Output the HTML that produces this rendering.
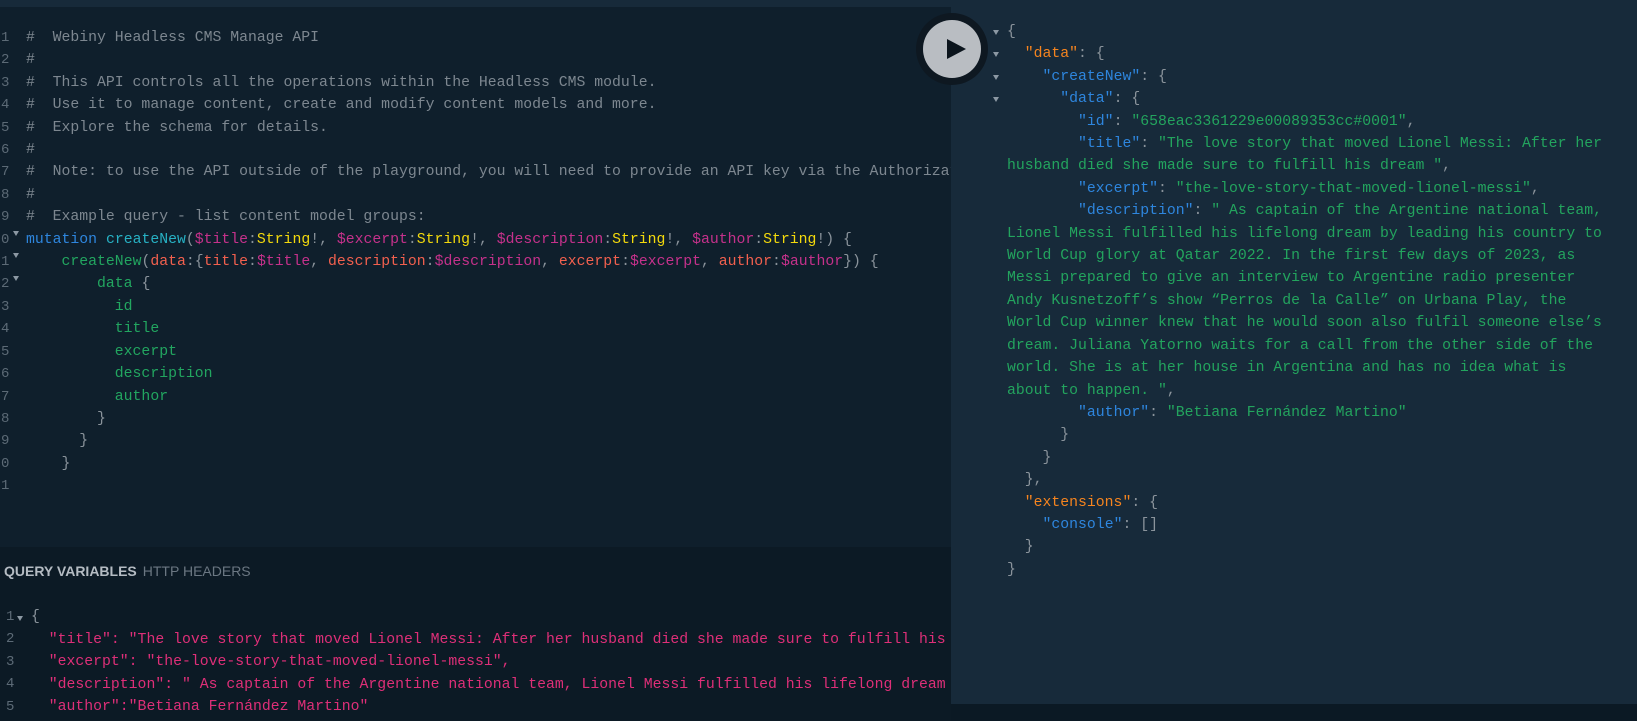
<!DOCTYPE html>
<html><head><meta charset="utf-8"><style>
*{margin:0;padding:0;box-sizing:border-box}
body{width:1637px;height:721px;overflow:hidden;background:#0b1924;position:relative;font-family:"Liberation Mono",monospace;font-size:14.8px}
.top{position:absolute;left:0;top:0;width:1637px;height:7px;background:#172a3a}
.left{position:absolute;left:0;top:7px;width:951px;height:540px;background:#0f1f2c;overflow:hidden}
.vars{position:absolute;left:0;top:547px;width:951px;height:174px;background:#0c1a25;overflow:hidden}
.right{position:absolute;left:951px;top:0;width:686px;height:704px;background:#172a3a;overflow:hidden}
.code{position:absolute;white-space:pre;line-height:22.4px}
.c{color:#7d8790}.k{color:#2e86de}.d{color:#27b1c4}.v{color:#c5318b}.t{color:#f3d90c}.p{color:#8a939b}.f{color:#22a660}.a{color:#f2604e}
.jk{color:#2e86de}.jo{color:#f5841f}.js{color:#23a45e}.pk{color:#de2f78}
.num{position:absolute;white-space:pre;line-height:22.4px;color:#5c6a76;font-size:14px}
.tri{position:absolute;width:0;height:0;border-left:3.5px solid transparent;border-right:3.5px solid transparent;border-top:5px solid #8c98a3}
.play{position:absolute;left:916px;top:13px;width:72px;height:72px;border-radius:50%;background:#0e1821}
.play i{position:absolute;left:7px;top:7px;width:58px;height:58px;border-radius:50%;background:#b9bdc2}
.play b{position:absolute;left:31px;top:26px;width:0;height:0;border-top:10.5px solid transparent;border-bottom:10.5px solid transparent;border-left:19px solid #0b141c}
.hdr{position:absolute;left:4px;top:563px;font-family:"Liberation Sans",sans-serif;font-size:14px;font-weight:bold;color:#b5bcc3}
.hdr span{color:#6b7782;font-weight:normal;margin-left:6px}
</style></head><body>
<div class="top"></div>
<div class="left">
<div class="num" style="left:1px;top:20px">1
2
3
4
5
6
7
8
9
0
1
2
3
4
5
6
7
8
9
0
1</div>
<div class="code" style="left:26px;top:20px"><span class="c">#  Webiny Headless CMS Manage API
#
#  This API controls all the operations within the Headless CMS module.
#  Use it to manage content, create and modify content models and more.
#  Explore the schema for details.
#
#  Note: to use the API outside of the playground, you will need to provide an API key via the Authorization header.
#
#  Example query - list content model groups:</span>
<span class="k">mutation</span> <span class="d">createNew</span><span class="p">(</span><span class="v">$title</span><span class="p">:</span><span class="t">String</span><span class="p">!, </span><span class="v">$excerpt</span><span class="p">:</span><span class="t">String</span><span class="p">!, </span><span class="v">$description</span><span class="p">:</span><span class="t">String</span><span class="p">!, </span><span class="v">$author</span><span class="p">:</span><span class="t">String</span><span class="p">!) {</span>
    <span class="f">createNew</span><span class="p">(</span><span class="a">data</span><span class="p">:{</span><span class="a">title</span><span class="p">:</span><span class="v">$title</span><span class="p">, </span><span class="a">description</span><span class="p">:</span><span class="v">$description</span><span class="p">, </span><span class="a">excerpt</span><span class="p">:</span><span class="v">$excerpt</span><span class="p">, </span><span class="a">author</span><span class="p">:</span><span class="v">$author</span><span class="p">}) {</span>
        <span class="f">data</span> <span class="p">{</span>
          <span class="f">id</span>
          <span class="f">title</span>
          <span class="f">excerpt</span>
          <span class="f">description</span>
          <span class="f">author</span>
        <span class="p">}</span>
      <span class="p">}</span>
    <span class="p">}</span>
</div>
<div class="tri" style="left:13px;top:224px"></div>
<div class="tri" style="left:13px;top:246px"></div>
<div class="tri" style="left:13px;top:269px"></div>
</div>
<div class="vars">
<div class="hdr" style="top:16px">QUERY VARIABLES<span>HTTP HEADERS</span></div>
<div class="num" style="left:6px;top:59px">1
2
3
4
5</div>
<div class="tri" style="left:17px;top:69px"></div>
<div class="code" style="left:31px;top:59px;line-height:22.6px"><span class="p">{</span>
  <span class="pk">"title": "The love story that moved Lionel Messi: After her husband died she made sure to fulfill his dream ",</span>
  <span class="pk">"excerpt": "the-love-story-that-moved-lionel-messi",</span>
  <span class="pk">"description": " As captain of the Argentine national team, Lionel Messi fulfilled his lifelong dream by leading his country</span>
  <span class="pk">"author":"Betiana Fernández Martino"</span></div>
</div>
<div class="right">
<div class="tri" style="left:42px;top:30px"></div>
<div class="tri" style="left:42px;top:52px"></div>
<div class="tri" style="left:42px;top:75px"></div>
<div class="tri" style="left:42px;top:97px"></div>
<div class="code" style="left:56px;top:21px"><span class="p">{</span>
  <span class="jo">"data"</span><span class="p">: {</span>
    <span class="jk">"createNew"</span><span class="p">: {</span>
      <span class="jk">"data"</span><span class="p">: {</span>
        <span class="jk">"id"</span><span class="p">: </span><span class="js">"658eac3361229e00089353cc#0001"</span><span class="p">,</span>
        <span class="jk">"title"</span><span class="p">: </span><span class="js">"The love story that moved Lionel Messi: After her
husband died she made sure to fulfill his dream "</span><span class="p">,</span>
        <span class="jk">"excerpt"</span><span class="p">: </span><span class="js">"the-love-story-that-moved-lionel-messi"</span><span class="p">,</span>
        <span class="jk">"description"</span><span class="p">: </span><span class="js">" As captain of the Argentine national team,
Lionel Messi fulfilled his lifelong dream by leading his country to
World Cup glory at Qatar 2022. In the first few days of 2023, as
Messi prepared to give an interview to Argentine radio presenter
Andy Kusnetzoff’s show “Perros de la Calle” on Urbana Play, the
World Cup winner knew that he would soon also fulfil someone else’s
dream. Juliana Yatorno waits for a call from the other side of the
world. She is at her house in Argentina and has no idea what is
about to happen. "</span><span class="p">,</span>
        <span class="jk">"author"</span><span class="p">: </span><span class="js">"Betiana Fernández Martino"</span>
      <span class="p">}</span>
    <span class="p">}</span>
  <span class="p">},</span>
  <span class="jo">"extensions"</span><span class="p">: {</span>
    <span class="jk">"console"</span><span class="p">: []</span>
  <span class="p">}</span>
<span class="p">}</span></div>
</div>
<div class="play"><i></i><b></b></div>
</body></html>
